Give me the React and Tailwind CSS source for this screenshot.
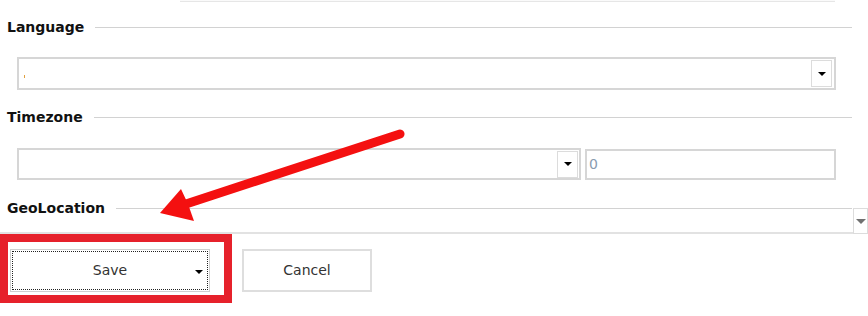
import React from 'react';

const font = { fontFamily: '"DejaVu Sans", sans-serif' };

const Caret = ({ color = 'border-t-black', size = 'border-l-[4px] border-r-[4px] border-t-[4px]' }) => (
  <span className={`block w-0 h-0 ${size} border-l-transparent border-r-transparent ${color}`} />
);

const GroupHeader = ({ label }) => (
  <div className="flex items-center h-[20px] w-[845px]">
    <span className="text-[14px] font-bold text-[#111] leading-[20px] whitespace-nowrap">{label}</span>
    <div className="flex-1 h-px bg-[#d2d2d2] ml-[11px]" />
  </div>
);

const DropButton = ({ className = '' }) => (
  <div className={`flex items-center justify-center bg-white border border-[#dcdcdc] ${className}`}>
    <Caret />
  </div>
);

const App = () => {
  return (
    <div className="relative w-[868px] h-[316px] bg-white overflow-hidden" style={font}>
      <div className="ml-[180px] w-[655px] h-[2px] border-b border-[#e6e6e6] bg-[#fafafa]" />

      <div className="pl-[7px]">
        <div className="mt-[15px]">
          <GroupHeader label="Language" />
        </div>

        <div className="mt-[20px] ml-[10px] w-[819px] h-[33px] border-2 border-[#d6d6d6] bg-white flex items-center pr-[2px]">
          <span className="ml-[5px] mt-[6px] w-px h-[3px] bg-[#e0a040]" />
          <div className="flex-1" />
          <DropButton className="w-[21px] h-[27px]" />
        </div>

        <div className="mt-[17px]">
          <GroupHeader label="Timezone" />
        </div>

        <div className="mt-[21px] ml-[10px] flex items-center gap-[4px]">
          <div className="w-[564px] h-[32px] border-2 border-[#d6d6d6] bg-white flex items-center justify-end pr-[1px]">
            <DropButton className="w-[21px] h-[27px]" />
          </div>
          <div className="w-[251px] h-[31px] border-2 border-[#d6d6d6] bg-white flex items-center pl-[2px]">
            <span className="text-[14px] text-[#8a9bb0] leading-none">0</span>
          </div>
        </div>
      </div>

      <div className="mt-[18px] flex">
        <div className="flex flex-col w-[853px] h-[36px] pl-[7px]">
          <GroupHeader label="GeoLocation" />
          <div className="flex-1 border-b-2 border-[#e2e2e2] -ml-[7px]" />
        </div>
        <div className="mt-[10px] w-[15px] h-[26px] border border-[#dcdcdc] bg-white flex items-center justify-center">
          <Caret color="border-t-[#707070]" size="border-l-[5px] border-r-[5px] border-t-[5px]" />
        </div>
      </div>

      <div className="flex items-start">
        <div className="w-[232px] h-[69px] border-[8px] border-[#e6212b] pl-[2px] pt-[7px]">
          <button className="relative w-[200px] h-[43px] bg-white border border-[#d0d0d0] p-[1px]">
            <div className="w-full h-full border border-dotted border-[#222] flex items-center justify-center text-[14px] text-[#333]">
              Save
            </div>
            <span className="absolute right-[6px] top-[20px]">
              <Caret />
            </span>
          </button>
        </div>
        <button className="ml-[10px] mt-[15px] w-[130px] h-[43px] bg-white border-2 border-[#dedede] text-[14px] text-[#333]">
          Cancel
        </button>
      </div>

      <svg className="absolute left-0 top-0 pointer-events-none" width="868" height="316" viewBox="0 0 868 316">
        <line x1="400" y1="134" x2="186" y2="204" stroke="#f41010" strokeWidth="9" strokeLinecap="round" />
        <polygon points="160,213 181,189 188,204 194,221" fill="#f41010" />
      </svg>
    </div>
  );
};

export default App;
